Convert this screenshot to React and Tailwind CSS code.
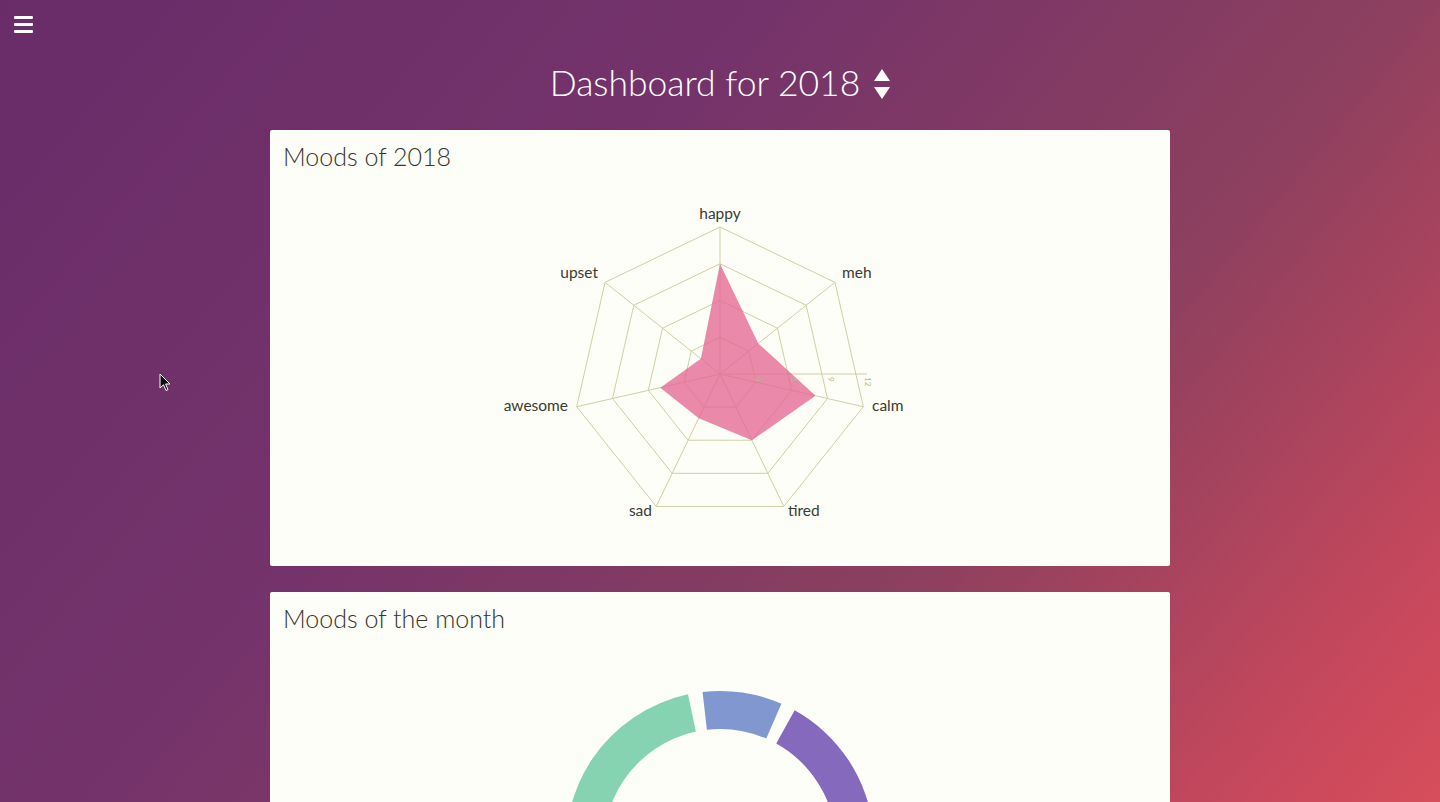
import React from "react";

const FONT = { fontFamily: "Lato, 'Open Sans', sans-serif" };

const MOODS = [
	{ name: "happy", value: 9, lx: 230, ly: 47, anchor: "middle" },
	{ name: "meh", value: 4, lx: 352, ly: 106, anchor: "start" },
	{ name: "calm", value: 8, lx: 382, ly: 239, anchor: "start" },
	{ name: "tired", value: 6, lx: 298, ly: 344, anchor: "start" },
	{ name: "sad", value: 4, lx: 162, ly: 344, anchor: "end" },
	{ name: "awesome", value: 5, lx: 78, ly: 239, anchor: "end" },
	{ name: "upset", value: 2, lx: 108, ly: 106, anchor: "end" },
];

const CX = 230;
const CY = 202;
const R = 147;
const MAX = 12;

function pt(i, r) {
	const a = ((-90 + (i * 360) / 7) * Math.PI) / 180;
	return [CX + r * Math.cos(a), CY + r * Math.sin(a)];
}

function RadarChart() {
	const rings = [1, 2, 3, 4].map((k) =>
		MOODS.map((_, i) => pt(i, (R * k) / 4).join(",")).join(" ")
	);
	const shape = MOODS.map((m, i) => pt(i, (R * m.value) / MAX).join(",")).join(" ");

	return (
		<svg width="460" height="379" className="block mx-auto" style={FONT}>
			{rings.map((p, i) => (
				<polygon key={i} points={p} fill="none" stroke="#cfcfa6" strokeWidth="1" />
			))}
			{MOODS.map((_, i) => {
				const [x, y] = pt(i, R);
				return <line key={i} x1={CX} y1={CY} x2={x} y2={y} stroke="#cfcfa6" strokeWidth="1" />;
			})}
			<line x1={CX} y1={CY} x2={CX + R} y2={CY} stroke="#cfcfa6" strokeWidth="1" />
			<polygon points={shape} fill="rgba(228,104,146,0.78)" stroke="none" />
			{[3, 6, 9, 12].map((t, i) => {
				const x = CX + (R * (i + 1)) / 4;
				return (
					<text
						key={t}
						x={x}
						y={CY + 3}
						fontSize="8"
						fill="#b8b894"
						transform={`rotate(90 ${x} ${CY + 3})`}
						dominantBaseline="middle"
					>
						{t}
					</text>
				);
			})}
			{MOODS.map((m) => (
				<text key={m.name} x={m.lx} y={m.ly} fontSize="15.5" fill="#3a3a30" textAnchor={m.anchor}>
					{m.name}
				</text>
			))}
		</svg>
	);
}

function arc(cx, cy, r0, r1, a0, a1) {
	const p = (r, a) => {
		const t = ((a - 90) * Math.PI) / 180;
		return [cx + r * Math.cos(t), cy + r * Math.sin(t)];
	};
	const large = a1 - a0 > 180 ? 1 : 0;
	const [x0, y0] = p(r1, a0);
	const [x1, y1] = p(r1, a1);
	const [x2, y2] = p(r0, a1);
	const [x3, y3] = p(r0, a0);
	return `M${x0},${y0} A${r1},${r1} 0 ${large} 1 ${x1},${y1} L${x2},${y2} A${r0},${r0} 0 ${large} 0 ${x3},${y3} Z`;
}

function DonutChart() {
	const segs = [
		{ a0: -6.5, a1: 23.5, color: "#8197cf" },
		{ a0: 29, a1: 140, color: "#8569bd" },
		{ a0: 145.5, a1: 200, color: "#e27fa0" },
		{ a0: 205.5, a1: 255, color: "#f0c27b" },
		{ a0: 260.5, a1: 348, color: "#86d3b1" },
	];
	return (
		<svg width="460" height="400" className="block mx-auto">
			{segs.map((s, i) => (
				<path key={i} d={arc(230, 211, 116, 154, s.a0, s.a1)} fill={s.color} />
			))}
		</svg>
	);
}

function Card({ title, children }) {
	return (
		<div className="bg-[#fefef8] rounded-[2px] px-[13px] pt-[10px] pb-[15px]">
			<h2 className="text-[25px] leading-[32px] text-[#35352e] font-light" style={FONT}>
				{title}
			</h2>
			{children}
		</div>
	);
}

export default function App() {
	return (
		<div
			className="relative min-h-screen overflow-hidden bg-[linear-gradient(130deg,#692c69_0%,#74336a_33%,#8d405f_60%,#c9485c_82%,#e6565a_100%)]"
			style={FONT}
		>
			<button className="absolute left-[14px] top-[16px] flex flex-col gap-[4px]">
				<span className="block w-[19px] h-[3px] bg-white rounded-[1px]" />
				<span className="block w-[19px] h-[3px] bg-white rounded-[1px]" />
				<span className="block w-[19px] h-[3px] bg-white rounded-[1px]" />
			</button>

			<svg className="absolute left-[159px] top-[373px]" width="12" height="19" viewBox="0 0 12 19">
				<path d="M1 1 L1 15 L4.5 11.8 L7 17.5 L9 16.6 L6.6 11 L11 11 Z" fill="#111" stroke="#fff" strokeWidth="1" />
			</svg>

			<header className="flex items-center justify-center gap-[14px] pt-[60px] pb-[24px]">
				<h1 className="text-[35.5px] leading-[46px] text-white font-light">Dashboard for 2018</h1>
				<svg width="16" height="31" viewBox="0 0 16 31" className="mt-[2px]">
					<path d="M8 0 L16 12 L0 12 Z" fill="#fff" />
					<path d="M0 18 L16 18 L8 30 Z" fill="#fff" />
				</svg>
			</header>

			<main className="w-[900px] mx-auto flex flex-col gap-[26px] pb-10">
				<Card title="Moods of 2018">
					<RadarChart />
				</Card>
				<Card title="Moods of the month">
					<DonutChart />
				</Card>
			</main>
		</div>
	);
}
